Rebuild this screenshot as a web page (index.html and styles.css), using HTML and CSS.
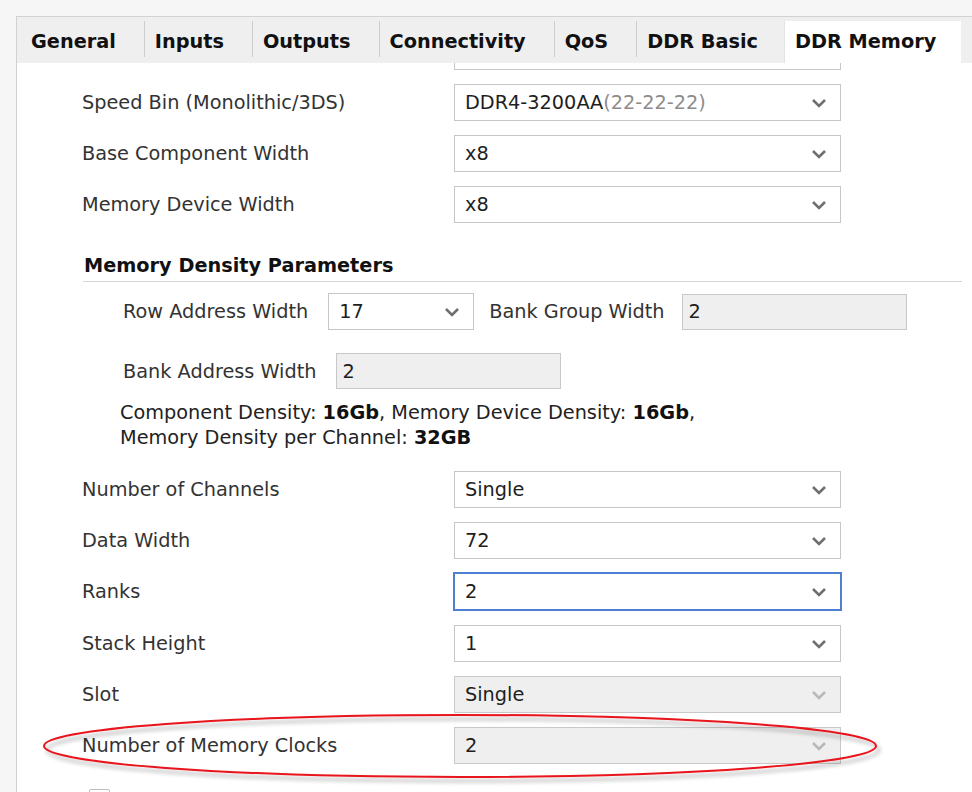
FILE: index.html
```html
<!DOCTYPE html>
<html>
<head>
<meta charset="utf-8">
<link rel="stylesheet" href="styles.css">
</head>
<body>
<div class="panel">
  <div class="tabbar">
    <div class="tab first">General</div>
    <div class="tab">Inputs</div>
    <div class="tab">Outputs</div>
    <div class="tab">Connectivity</div>
    <div class="tab">QoS</div>
    <div class="tab tight">DDR Basic</div>
    <div class="tab active">DDR Memory</div>
    <div class="filler"></div>
  </div>
  <div class="content">
    <div class="row row-partial">
      <span class="label"></span>
      <div class="combo"><span class="value"></span><svg class="chev" viewBox="0 0 16 10"><path d="M2 2 L8 8 L14 2"/></svg></div>
    </div>
    <div class="row">
      <span class="label">Speed Bin (Monolithic/3DS)</span>
      <div class="combo"><span class="value">DDR4-3200AA<span class="muted">(22-22-22)</span></span><svg class="chev" viewBox="0 0 16 10"><path d="M2 2 L8 8 L14 2"/></svg></div>
    </div>
    <div class="row">
      <span class="label">Base Component Width</span>
      <div class="combo"><span class="value">x8</span><svg class="chev" viewBox="0 0 16 10"><path d="M2 2 L8 8 L14 2"/></svg></div>
    </div>
    <div class="row">
      <span class="label">Memory Device Width</span>
      <div class="combo"><span class="value">x8</span><svg class="chev" viewBox="0 0 16 10"><path d="M2 2 L8 8 L14 2"/></svg></div>
    </div>

    <div class="section-title">Memory Density Parameters</div>

    <div class="subrow first-sub">
      <span class="sublabel">Row Address Width</span>
      <div class="combo small"><span class="value">17</span><svg class="chev" viewBox="0 0 16 10"><path d="M2 2 L8 8 L14 2"/></svg></div>
      <span class="sublabel after">Bank Group Width</span>
      <div class="field">2</div>
    </div>
    <div class="subrow second-sub">
      <span class="sublabel">Bank Address Width</span>
      <div class="field">2</div>
    </div>
    <div class="density">
      <div>Component Density: <b>16Gb</b>, Memory Device Density: <b>16Gb</b>,</div>
      <div>Memory Density per Channel: <b>32GB</b></div>
    </div>

    <div class="row after-density">
      <span class="label">Number of Channels</span>
      <div class="combo"><span class="value">Single</span><svg class="chev" viewBox="0 0 16 10"><path d="M2 2 L8 8 L14 2"/></svg></div>
    </div>
    <div class="row">
      <span class="label">Data Width</span>
      <div class="combo"><span class="value">72</span><svg class="chev" viewBox="0 0 16 10"><path d="M2 2 L8 8 L14 2"/></svg></div>
    </div>
    <div class="row">
      <span class="label">Ranks</span>
      <div class="combo focused"><span class="value">2</span><svg class="chev" viewBox="0 0 16 10"><path d="M2 2 L8 8 L14 2"/></svg></div>
    </div>
    <div class="row wide-gap">
      <span class="label">Stack Height</span>
      <div class="combo"><span class="value">1</span><svg class="chev" viewBox="0 0 16 10"><path d="M2 2 L8 8 L14 2"/></svg></div>
    </div>
    <div class="row">
      <span class="label">Slot</span>
      <div class="combo disabled"><span class="value">Single</span><svg class="chev" viewBox="0 0 16 10"><path d="M2 2 L8 8 L14 2"/></svg></div>
    </div>
    <div class="row">
      <span class="label">Number of Memory Clocks</span>
      <div class="combo disabled"><span class="value">2</span><svg class="chev" viewBox="0 0 16 10"><path d="M2 2 L8 8 L14 2"/></svg></div>
    </div>
    <div class="check-row">
      <span class="checkbox"></span>
    </div>
  </div>
</div>
<svg class="annotation" width="972" height="792" viewBox="0 0 972 792">
  <defs>
    <filter id="sh" x="-10%" y="-50%" width="120%" height="200%">
      <feGaussianBlur in="SourceAlpha" stdDeviation="2"/>
      <feOffset dx="3" dy="4" result="b"/>
      <feComponentTransfer><feFuncA type="linear" slope="0.35"/></feComponentTransfer>
      <feMerge><feMergeNode/><feMergeNode in="SourceGraphic"/></feMerge>
    </filter>
  </defs>
  <ellipse cx="460" cy="746" rx="416" ry="31" fill="none" stroke="#e8141b" stroke-width="2" filter="url(#sh)"/>
</svg>
</body>
</html>
```

FILE: styles.css
```css
* { box-sizing: border-box; }

html, body {
  margin: 0;
  padding: 0;
  width: 972px;
  height: 792px;
  overflow: hidden;
  background: #f6f6f6;
  font-family: "DejaVu Sans", sans-serif;
  font-size: 19.3px;
  color: #333;
}

.panel {
  margin: 16px 0 0 16px;
  height: 776px;
  border-top: 1px solid #d2d2d2;
  border-left: 1px solid #d2d2d2;
  background: #fff;
  display: flex;
  flex-direction: column;
}

.tabbar {
  display: flex;
  height: 46px;
  background: #efefef;
  flex: none;
}

.tab {
  margin: 4px 0 6px 0;
  padding: 10px 28px 0 10px;
  line-height: 22px;
  font-weight: bold;
  color: #111;
  border-left: 1px solid #cdcdcd;
  white-space: nowrap;
}

.tab.first {
  border-left: none;
  padding-left: 14px;
  padding-right: 28px;
}

.tab.tight {
  padding-right: 26px;
}

.tab.active {
  background: #fff;
  margin-bottom: 0;
  border-left-color: #e3e3e3;
  padding-right: 25px;
}

.filler {
  flex: 1;
}

.content {
  flex: 1;
  overflow: hidden;
  padding-left: 65px;
}

.row {
  display: flex;
  align-items: center;
  height: 37px;
  margin-top: 14px;
}

.row.wide-gap {
  margin-top: 15px;
}

.row-partial {
  margin-top: -30px;
}

.label {
  width: 372px;
  flex: none;
  white-space: nowrap;
}

.combo {
  width: 387px;
  height: 37px;
  border: 1px solid #c6c6c6;
  background: #fff;
  display: flex;
  align-items: center;
  justify-content: space-between;
  padding: 0 13px 0 10px;
  color: #1e1e1e;
  white-space: nowrap;
  flex: none;
}

.combo.small {
  width: 146px;
}

.combo.focused {
  border-color: #4f7fd3;
  box-shadow: 0 0 0 1px #4f7fd3;
}

.combo.disabled {
  background: #efefef;
  border-color: #c8c8c8;
}

.muted {
  color: #8c8c8c;
}

.chev {
  width: 16px;
  height: 10px;
  flex: none;
}

.chev path {
  fill: none;
  stroke: #6f6f6f;
  stroke-width: 2.6;
  stroke-linecap: butt;
  stroke-linejoin: miter;
}

.disabled .chev path {
  stroke: #b8b8b8;
}

.section-title {
  margin: 32px 10px 0 1px;
  padding: 0 0 4px 1px;
  line-height: 22px;
  font-weight: bold;
  color: #111;
  border-bottom: 1px solid #d6d6d6;
}

.subrow {
  display: flex;
  align-items: center;
  padding-left: 41px;
}

.first-sub {
  margin-top: 11px;
  height: 37px;
}

.second-sub {
  margin-top: 23px;
  height: 36px;
}

.sublabel {
  white-space: nowrap;
  margin-right: 20px;
}

.second-sub .sublabel {
  margin-right: 19px;
}

.sublabel.after {
  margin-left: 15px;
  margin-right: 17px;
}

.field {
  width: 225px;
  height: 36px;
  border: 1px solid #c8c8c8;
  background: #efefef;
  display: flex;
  align-items: center;
  padding-left: 6px;
  color: #1e1e1e;
  flex: none;
}

.density {
  margin: 11px 0 0 38px;
  line-height: 25px;
  color: #222;
}

.density b {
  color: #111;
}

.row.after-density {
  margin-top: 21px;
}

.check-row {
  margin-top: 25px;
  padding-left: 7px;
}

.checkbox {
  display: block;
  width: 21px;
  height: 21px;
  border: 1px solid #bdbdbd;
  border-radius: 2px;
  background: #fff;
}

.annotation {
  position: absolute;
  left: 0;
  top: 0;
  pointer-events: none;
}
```
